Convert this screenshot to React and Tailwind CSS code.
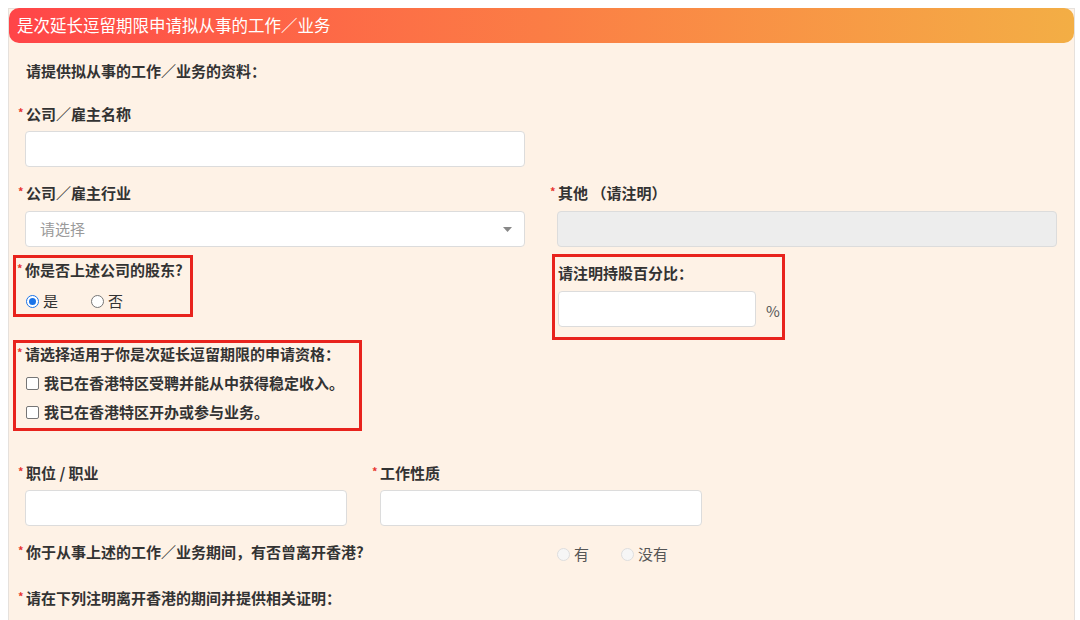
import React from "react";

const font = { fontFamily: '"Noto Sans CJK SC", "Noto Sans", sans-serif' };

function Req() {
  return (
    <span className="inline-block w-[8px] -ml-[8px] text-[11px] leading-none text-[#e8352f] align-top mt-[3px]">
      *
    </span>
  );
}

function Label({ req, children, className = "" }) {
  return (
    <div className={`h-[20px] text-[15px] leading-[20px] font-bold text-[#333] whitespace-nowrap ${className}`}>
      {req && <Req />}
      {children}
    </div>
  );
}

function TextInput({ className = "", disabled }) {
  return (
    <div
      className={`h-[36px] rounded-[4px] border border-[#dcdcdc] ${
        disabled ? "bg-[#ededed]" : "bg-white"
      } ${className}`}
    />
  );
}

function Radio({ checked, muted, label, className = "" }) {
  return (
    <label className={`flex items-center h-[20px] text-[15px] ${muted ? "text-[#555]" : "text-[#333]"} ${className}`}>
      <span
        className={`w-[13px] h-[13px] rounded-full border flex items-center justify-center mr-[4px] ${
          checked
            ? "border-[#1a73e8] bg-white"
            : muted
            ? "border-[#dedede] bg-[#f6f6f6]"
            : "border-[#767676] bg-white"
        }`}
      >
        {checked && <span className="w-[7px] h-[7px] rounded-full bg-[#1a73e8]" />}
      </span>
      {label}
    </label>
  );
}

function Check({ label }) {
  return (
    <label className="flex items-center h-[20px] text-[15px] font-bold text-[#333] whitespace-nowrap">
      <span className="w-[13px] h-[13px] rounded-[2px] border border-[#767676] bg-white mr-[5px]" />
      {label}
    </label>
  );
}

export default function App() {
  return (
    <div className="w-[1080px] h-[620px] bg-white overflow-hidden pt-[8px]" style={font}>
      <div className="ml-[8px] w-[1067px] border border-[#e6e1dc] bg-[#fef2e6]">
        {/* title bar */}
        <div className="h-[35px] rounded-[10px] bg-gradient-to-r from-[#ff4448] via-[#fb7d45] to-[#f3ae45] flex items-center pl-[8px] text-white text-[16.5px] -mt-px">
          是次延长逗留期限申请拟从事的工作／业务
        </div>

        <div className="pl-[16px] pb-[20px]">
          <Label className="mt-[18px] ml-[1px]">请提供拟从事的工作／业务的资料：</Label>

          <Label req className="mt-[23px] ml-[1px]">公司／雇主名称</Label>
          <TextInput className="mt-[7px] w-[500px]" />

          <div className="grid grid-cols-[500px_500px] gap-x-[32px] mt-[16px]">
            <div>
              <Label req className="ml-[1px]">公司／雇主行业</Label>
              <div className="mt-[8px] h-[36px] rounded-[4px] border border-[#dcdcdc] bg-white flex items-center justify-between pl-[14px] pr-[12px]">
                <span className="text-[15px] text-[#9a9a9a]">请选择</span>
                <svg width="9" height="5" viewBox="0 0 9 5">
                  <path d="M0 0h9L4.5 5z" fill="#888" />
                </svg>
              </div>
            </div>
            <div>
              <Label req className="ml-[1px]">其他 （请注明）</Label>
              <TextInput disabled className="mt-[8px]" />
            </div>
          </div>

          <div className="grid grid-cols-[500px_500px] gap-x-[32px] items-start mt-[7px]">
            {/* shareholder question */}
            <div className="-ml-[12px] w-[180px] h-[62px] border-[3px] border-[#e8231d] pl-[9px] pt-[2px] mt-[1px]">
              <Label req>你是否上述公司的股东?</Label>
              <div className="flex mt-[11px] ml-[1px]">
                <Radio checked label="是" />
                <Radio label="否" className="ml-[33px]" />
              </div>
            </div>

            {/* percentage */}
            <div className="-ml-[5px] w-[233px] h-[86px] border-[3px] border-[#e8231d] pl-[3px] pt-[6px]">
              <Label>请注明持股百分比：</Label>
              <div className="flex items-end mt-[8px]">
                <TextInput className="w-[198px]" />
                <span className="ml-[10px] mb-[5px] text-[15px] text-[#555]">%</span>
              </div>
            </div>
          </div>

          {/* eligibility */}
          <div className="-ml-[12px] w-[349px] h-[91px] border-[3px] border-[#e8231d] pl-[9px] pt-[1px]">
            <Label req>请选择适用于你是次延长逗留期限的申请资格：</Label>
            <div className="mt-[9px] ml-[1px] flex flex-col gap-[9px]">
              <Check label="我已在香港特区受聘并能从中获得稳定收入。" />
              <Check label="我已在香港特区开办或参与业务。" />
            </div>
          </div>

          <div className="flex gap-x-[33px] mt-[32px]">
            <div className="w-[322px]">
              <Label req className="ml-[1px]">职位 / 职业</Label>
              <TextInput className="mt-[7px]" />
            </div>
            <div className="w-[322px]">
              <Label req>工作性质</Label>
              <TextInput className="mt-[7px]" />
            </div>
          </div>

          <div className="grid grid-cols-[500px_500px] gap-x-[32px] mt-[16px]">
            <Label req className="ml-[1px]">你于从事上述的工作／业务期间，有否曾离开香港?</Label>
            <div className="flex mt-[2px]">
              <Radio muted label="有" />
              <Radio muted label="没有" className="ml-[32px]" />
            </div>
          </div>

          <Label req className="mt-[24px] ml-[1px]">请在下列注明离开香港的期间并提供相关证明：</Label>
        </div>
      </div>
    </div>
  );
}
